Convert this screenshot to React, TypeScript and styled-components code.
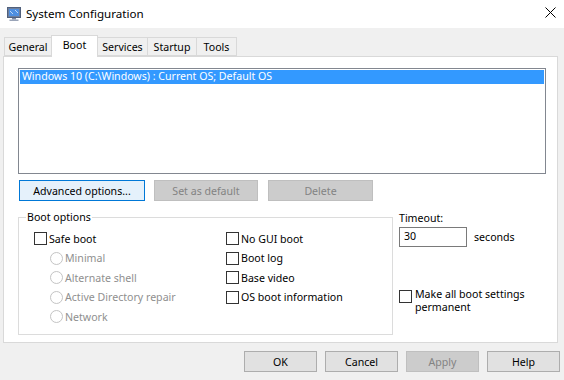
import React from "react";
import styled, { createGlobalStyle } from "styled-components";

const Global = createGlobalStyle`
  html, body { margin: 0; padding: 0; background: #f0f0f0; }
  body { font-family: "Noto Sans", "Open Sans", sans-serif; font-size: 10.6px; color: #000; }
  * { box-sizing: border-box; }
`;

const Window = styled.div`
  width: 564px;
  height: 380px;
  background: #f0f0f0;
  display: flex;
  flex-direction: column;
  overflow: hidden;
`;

const TitleBar = styled.div`
  height: 28px;
  background: #fff;
  display: flex;
  align-items: center;
  padding-left: 6px;
`;

const Title = styled.span`
  font-size: 11.6px;
  margin-left: 4px;
  margin-top: -2px;
  color: #000;
`;

const Close = styled.div`
  margin-left: auto;
  width: 28px;
  height: 28px;
  display: flex;
  align-items: center;
  justify-content: center;
  margin-top: -3px;
`;

const Body = styled.div`
  padding: 7px 6px 0 3px;
  display: flex;
  flex-direction: column;
`;

const TabStrip = styled.div`
  display: flex;
  align-items: flex-end;
  height: 21px;
  padding-left: 1px;
  position: relative;
  z-index: 1;
`;

const Tab = styled.div<{ $active?: boolean; $w: number }>`
  width: ${(p) => p.$w}px;
  height: ${(p) => (p.$active ? 22 : 19)}px;
  margin-bottom: ${(p) => (p.$active ? -1 : 0)}px;
  background: ${(p) => (p.$active ? "#fff" : "#f0f0f0")};
  border: 1px solid #d9d9d9;
  border-bottom: ${(p) => (p.$active ? "none" : "1px solid #d9d9d9")};
  margin-left: -1px;
  display: flex;
  align-items: flex-start;
  justify-content: center;
  padding-top: 1px;
  line-height: 16px;
`;

const Panel = styled.div`
  width: 555px;
  height: 287px;
  background: #fff;
  border: 1px solid #d9d9d9;
  padding: 11px 11px 0 14px;
  display: flex;
  flex-direction: column;
`;

const ListBox = styled.div`
  height: 106px;
  border: 1px solid #828790;
  padding: 1px;
  background: #fff;
`;

const ListRow = styled.div<{ $selected?: boolean }>`
  height: 14px;
  line-height: 13px;
  padding-left: 2px;
  background: ${(p) => (p.$selected ? "#3399ff" : "transparent")};
  color: ${(p) => (p.$selected ? "#fff" : "#000")};
  white-space: nowrap;
`;

const ButtonRow = styled.div`
  display: flex;
  margin-top: 6px;
  margin-left: 1px;
  gap: 9px;
`;

const Button = styled.button<{ $w: number; $variant?: "focus" | "disabled" | "normal" }>`
  width: ${(p) => p.$w}px;
  height: 21px;
  font-family: inherit;
  font-size: 10.6px;
  padding: 0;
  line-height: 18px;
  background: ${(p) =>
    p.$variant === "focus" ? "#e5f1fb" : p.$variant === "disabled" ? "#cccccc" : "#e1e1e1"};
  border: 1px solid
    ${(p) =>
      p.$variant === "focus" ? "#0078d7" : p.$variant === "disabled" ? "#bfbfbf" : "#adadad"};
  color: ${(p) => (p.$variant === "disabled" ? "#838383" : "#000")};
`;

const Lower = styled.div`
  display: flex;
  margin-top: 8px;
`;

const Group = styled.fieldset`
  width: 375px;
  height: 126px;
  margin: 0;
  border: 1px solid #dcdcdc;
  padding: 4px 0 0 15px;
  display: grid;
  grid-template-columns: 192px 1fr;
  align-content: start;
`;

const Legend = styled.legend`
  padding: 0 1px;
  margin-left: -8px;
  line-height: 16px;
`;

const Column = styled.div`
  display: flex;
  flex-direction: column;
`;

const Row = styled.div<{ $indent?: boolean; $disabled?: boolean }>`
  height: 19.5px;
  display: flex;
  align-items: center;
  padding-left: ${(p) => (p.$indent ? 16 : 0)}px;
  color: ${(p) => (p.$disabled ? "#8f8f8f" : "#000")};
  white-space: nowrap;
`;

const CheckBox = styled.span`
  width: 13px;
  height: 13px;
  border: 1px solid #333;
  background: #fff;
  margin-right: 2px;
  flex: none;
`;

const Radio = styled.span`
  width: 13px;
  height: 13px;
  border: 1px solid #c4c4c4;
  border-radius: 50%;
  background: #fff;
  margin-right: 2px;
  flex: none;
`;

const Side = styled.div`
  margin-left: 6px;
  display: flex;
  flex-direction: column;
  padding-top: 1px;
`;

const Label = styled.div`
  line-height: 16px;
`;

const TimeoutRow = styled.div`
  display: flex;
  align-items: center;
  margin-top: 1px;
  gap: 7px;
`;

const Input = styled.div`
  width: 68px;
  height: 20px;
  border: 1px solid #7a7a7a;
  padding-left: 4px;
  line-height: 17px;
`;

const PermRow = styled.div`
  display: flex;
  align-items: flex-start;
  margin-top: 42px;
`;

const PermBox = styled(CheckBox)`
  margin-right: 3px;
  margin-top: 1px;
`;

const PermText = styled.div`
  display: flex;
  flex-direction: column;
  margin-top: -1px;
`;

const PermLine = styled.span`
  height: 13px;
  line-height: 13px;
  white-space: nowrap;
`;

const Footer = styled.div`
  display: flex;
  justify-content: flex-end;
  gap: 8px;
  padding: 8px 4px 0 0;
`;

const AppIcon = () => (
  <svg width="16" height="16" viewBox="0 0 16 16">
    <rect x="1.5" y="1.5" width="13" height="10" fill="#6f7f9c" stroke="#51607c" />
    <rect x="3" y="3" width="10" height="7" fill="#4f8fe0" />
    <path d="M4 5 L7 8 M9 4 L12 7" stroke="#bcd6f5" strokeWidth="1" />
    <rect x="6" y="12" width="4" height="1.5" fill="#7c87a0" />
    <rect x="3.5" y="13.5" width="9" height="1.5" fill="#9aa4b8" />
  </svg>
);

const CloseIcon = () => (
  <svg width="11" height="11" viewBox="0 0 11 11">
    <path d="M0.5 0.5 L10.5 10.5 M10.5 0.5 L0.5 10.5" stroke="#000" strokeWidth="1" />
  </svg>
);

export default function App() {
  return (
    <Window>
      <Global />
      <TitleBar>
        <AppIcon />
        <Title>System Configuration</Title>
        <Close>
          <CloseIcon />
        </Close>
      </TitleBar>
      <Body>
        <TabStrip>
          <Tab $w={48} style={{ marginLeft: 0 }}>General</Tab>
          <Tab $w={47} $active>Boot</Tab>
          <Tab $w={51}>Services</Tab>
          <Tab $w={50}>Startup</Tab>
          <Tab $w={41}>Tools</Tab>
        </TabStrip>
        <Panel>
          <ListBox>
            <ListRow $selected>Windows 10 (C:\Windows) : Current OS; Default OS</ListRow>
          </ListBox>
          <ButtonRow>
            <Button $w={126} $variant="focus">Advanced options...</Button>
            <Button $w={104} $variant="disabled">Set as default</Button>
            <Button $w={105} $variant="disabled" style={{ marginLeft: 1 }}>Delete</Button>
          </ButtonRow>
          <Lower>
            <Group>
              <Legend>Boot options</Legend>
              <Column>
                <Row><CheckBox />Safe boot</Row>
                <Row $indent $disabled><Radio />Minimal</Row>
                <Row $indent $disabled><Radio />Alternate shell</Row>
                <Row $indent $disabled><Radio />Active Directory repair</Row>
                <Row $indent $disabled><Radio />Network</Row>
              </Column>
              <Column>
                <Row><CheckBox />No GUI boot</Row>
                <Row><CheckBox />Boot log</Row>
                <Row><CheckBox />Base video</Row>
                <Row><CheckBox />OS boot information</Row>
              </Column>
            </Group>
            <Side>
              <Label>Timeout:</Label>
              <TimeoutRow>
                <Input>30</Input>
                <span>seconds</span>
              </TimeoutRow>
              <PermRow>
                <PermBox />
                <PermText>
                  <PermLine>Make all boot settings</PermLine>
                  <PermLine>permanent</PermLine>
                </PermText>
              </PermRow>
            </Side>
          </Lower>
        </Panel>
      </Body>
      <Footer>
        <Button $w={73}>OK</Button>
        <Button $w={73}>Cancel</Button>
        <Button $w={73} $variant="disabled">Apply</Button>
        <Button $w={73}>Help</Button>
      </Footer>
    </Window>
  );
}
